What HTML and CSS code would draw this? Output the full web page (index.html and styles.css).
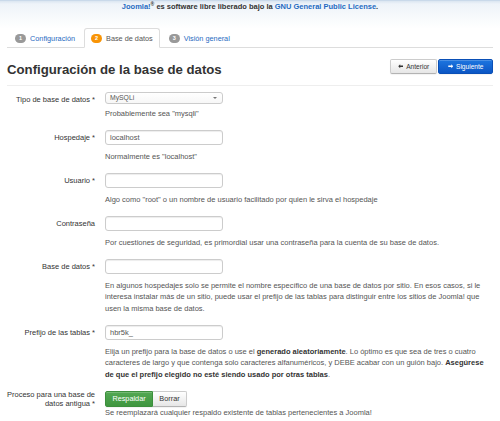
FILE: index.html
```html
<!DOCTYPE html>
<html lang="es">
<head>
<meta charset="utf-8">
<title>Configuración de la base de datos</title>
<link rel="stylesheet" href="styles.css">
</head>
<body>
<header class="top">
  <p class="license"><a href="#">Joomla!</a><sup>®</sup> es software libre liberado bajo la <a href="#">GNU General Public License</a>.</p>
</header>
<nav class="tabs">
  <a class="tab" href="#"><span class="badge">1</span>Configuración</a>
  <a class="tab active" href="#"><span class="badge badge-warning">2</span>Base de datos</a>
  <a class="tab" href="#"><span class="badge">3</span>Visión general</a>
</nav>
<div class="titlebar">
  <h3 class="title">Configuración de la base de datos</h3>
  <div class="actions">
    <button class="btn btn-small" type="button"><svg class="ico" viewBox="0 0 10 8"><path d="M4 0.5 L0.5 4 L4 7.5 L4 5.2 L9.5 5.2 L9.5 2.8 L4 2.8 Z" fill="currentColor"/></svg>Anterior</button>
    <button class="btn btn-small btn-primary" type="button"><svg class="ico" viewBox="0 0 10 8"><path d="M6 0.5 L9.5 4 L6 7.5 L6 5.2 L0.5 5.2 L0.5 2.8 L6 2.8 Z" fill="currentColor"/></svg>Siguiente</button>
  </div>
</div>
<form class="form">
  <div class="group">
    <label class="label">Tipo de base de datos *</label>
    <div class="controls">
      <div class="select">MySQLi<span class="caret"></span></div>
      <p class="help help-tight">Probablemente sea "mysqli"</p>
    </div>
  </div>
  <div class="group">
    <label class="label">Hospedaje *</label>
    <div class="controls">
      <div class="input">localhost</div>
      <p class="help">Normalmente es "localhost"</p>
    </div>
  </div>
  <div class="group">
    <label class="label">Usuario *</label>
    <div class="controls">
      <div class="input"></div>
      <p class="help">Algo como "root" o un nombre de usuario facilitado por quien le sirva el hospedaje</p>
    </div>
  </div>
  <div class="group">
    <label class="label">Contraseña</label>
    <div class="controls">
      <div class="input"></div>
      <p class="help">Por cuestiones de seguridad, es primordial usar una contraseña para la cuenta de su base de datos.</p>
    </div>
  </div>
  <div class="group">
    <label class="label">Base de datos *</label>
    <div class="controls">
      <div class="input"></div>
      <p class="help">En algunos hospedajes solo se permite el nombre específico de una base de datos por sitio. En esos casos, si le interesa instalar más de un sitio, puede usar el prefijo de las tablas para distinguir entre los sitios de Joomla! que usen la misma base de datos.</p>
    </div>
  </div>
  <div class="group">
    <label class="label">Prefijo de las tablas *</label>
    <div class="controls">
      <div class="input">hbr5k_</div>
      <p class="help">Elija un prefijo para la base de datos o use el <strong>generado aleatoriamente</strong>. Lo óptimo es que sea de tres o cuatro caracteres de largo y que contenga solo caracteres alfanuméricos, y DEBE acabar con un guión bajo. <strong>Asegúrese de que el prefijo elegido no esté siendo usado por otras tablas</strong>.</p>
    </div>
  </div>
  <div class="group group-last">
    <label class="label label-multi">Proceso para una base de datos antigua *</label>
    <div class="controls">
      <div class="btn-group">
        <button class="btn btn-success" type="button">Respaldar</button>
        <button class="btn" type="button">Borrar</button>
      </div>
      <p class="help help-flush">Se reemplazará cualquier respaldo existente de tablas pertenecientes a Joomla!</p>
    </div>
  </div>
</form>
</body>
</html>
```

FILE: styles.css
```css
html, body {
  margin: 0;
  padding: 0;
  background: #fff;
}

body {
  font-family: "Liberation Sans", Arial, Helvetica, sans-serif;
  font-size: 7.5px;
  line-height: 11.5px;
  color: #333;
  height: 421px;
  overflow: hidden;
}

a {
  color: #1f6bc1;
  text-decoration: none;
}

/* header */
.top {
  height: 28px;
  background: linear-gradient(#dbe6f1 0, #eef3f9 3px, #f7fafc 16px, #fff 28px);
  border-top: 1px solid #c9d9ea;
  box-sizing: border-box;
}

.license {
  margin: 0;
  text-align: center;
  font-weight: bold;
  line-height: 11px;
  color: #333;
}

.license sup {
  font-size: 5px;
  line-height: 0;
  vertical-align: 3px;
}

/* tabs */
.tabs {
  display: flex;
  margin: 0 7px;
  padding-left: 1px;
  border-bottom: 1px solid #ddd;
}

.tab {
  display: flex;
  align-items: center;
  gap: 4px;
  padding: 3.5px 6px;
  line-height: 11px;
  font-size: 7.3px;
  margin-right: 2px;
  margin-bottom: -1px;
  border: 1px solid transparent;
  border-radius: 3px 3px 0 0;
  color: #1f6bc1;
}

.tab.active {
  color: #555;
  background: #fff;
  border-color: #ddd #ddd #fff;
}

.badge {
  display: inline-block;
  min-width: 11px;
  height: 9px;
  line-height: 9px;
  border-radius: 5px;
  background: #999;
  color: #fff;
  font-size: 5.5px;
  font-weight: bold;
  text-align: center;
}

.badge-warning {
  background: #f89406;
}

/* title */
.titlebar {
  display: flex;
  justify-content: space-between;
  align-items: flex-start;
  margin: 0 7px;
  padding: 11px 0 4px;
  border-bottom: 1px solid #eee;
}

.title {
  margin: 0;
  font-size: 13.2px;
  line-height: 22px;
  font-weight: bold;
  color: #333;
}

.actions {
  display: flex;
  gap: 1px;
}

.btn {
  display: inline-flex;
  align-items: center;
  justify-content: center;
  gap: 3px;
  height: 16px;
  padding: 0 7px;
  font-family: inherit;
  font-size: 7.3px;
  color: #333;
  background: linear-gradient(#fff, #e6e6e6);
  border: 1px solid #ccc;
  border-bottom-color: #b3b3b3;
  border-radius: 2px;
  box-shadow: inset 0 1px 0 rgba(255,255,255,.2), 0 1px 1px rgba(0,0,0,.05);
  cursor: pointer;
}

.btn-small {
  height: 15px;
  font-size: 6.6px;
  padding: 0 6px;
}

.actions .btn:first-child {
  width: 47px;
}

.actions .btn-primary {
  width: 55px;
}

.btn-primary {
  color: #fff;
  background: linear-gradient(#1d76e0, #0b55c4);
  border-color: #0a4fb6;
}

.btn-success {
  color: #fff;
  background: linear-gradient(#53a853, #3f963f);
  border-color: #3d8f3d;
}

.ico {
  width: 5.5px;
  height: 4.5px;
}

/* form */
.form {
  margin: 0 7px;
  padding-top: 6px;
}

.group {
  display: grid;
  grid-template-columns: 88px 1fr;
  column-gap: 10px;
  margin-bottom: 10.5px;
}

.label {
  text-align: right;
  padding-top: 2px;
  line-height: 11.5px;
  color: #333;
}

.label-multi {
  padding-top: 0.5px;
  line-height: 8.5px;
}

.controls {
  min-width: 0;
}

.input,
.select {
  position: relative;
  box-sizing: border-box;
  width: 118px;
  height: 15px;
  padding: 0 4px;
  line-height: 13px;
  border: 1px solid #ccc;
  border-radius: 3px;
  box-shadow: inset 0 1px 1px rgba(0,0,0,.075);
  background: #fff;
  color: #555;
}

.select {
  height: 12px;
  line-height: 10px;
  font-size: 6.8px;
  color: #555;
  box-shadow: none;
  background: linear-gradient(#fff, #f7f7f7);
}

.caret {
  position: absolute;
  right: 5px;
  top: 4px;
  border-left: 2px solid transparent;
  border-right: 2px solid transparent;
  border-top: 2.5px solid #777;
}

.help {
  margin: 6px 0 0;
  color: #555;
}

.help strong {
  color: #333;
}

.help-tight {
  margin-top: 3.5px;
}

.help-flush {
  margin-top: 0;
}

.btn-group {
  display: flex;
}

.btn-group .btn {
  border-radius: 0;
}

.btn-group .btn:first-child {
  border-radius: 2px 0 0 2px;
  width: 48px;
}

.btn-group .btn:last-child {
  border-radius: 0 2px 2px 0;
  border-left: none;
  width: 34px;
}
```
